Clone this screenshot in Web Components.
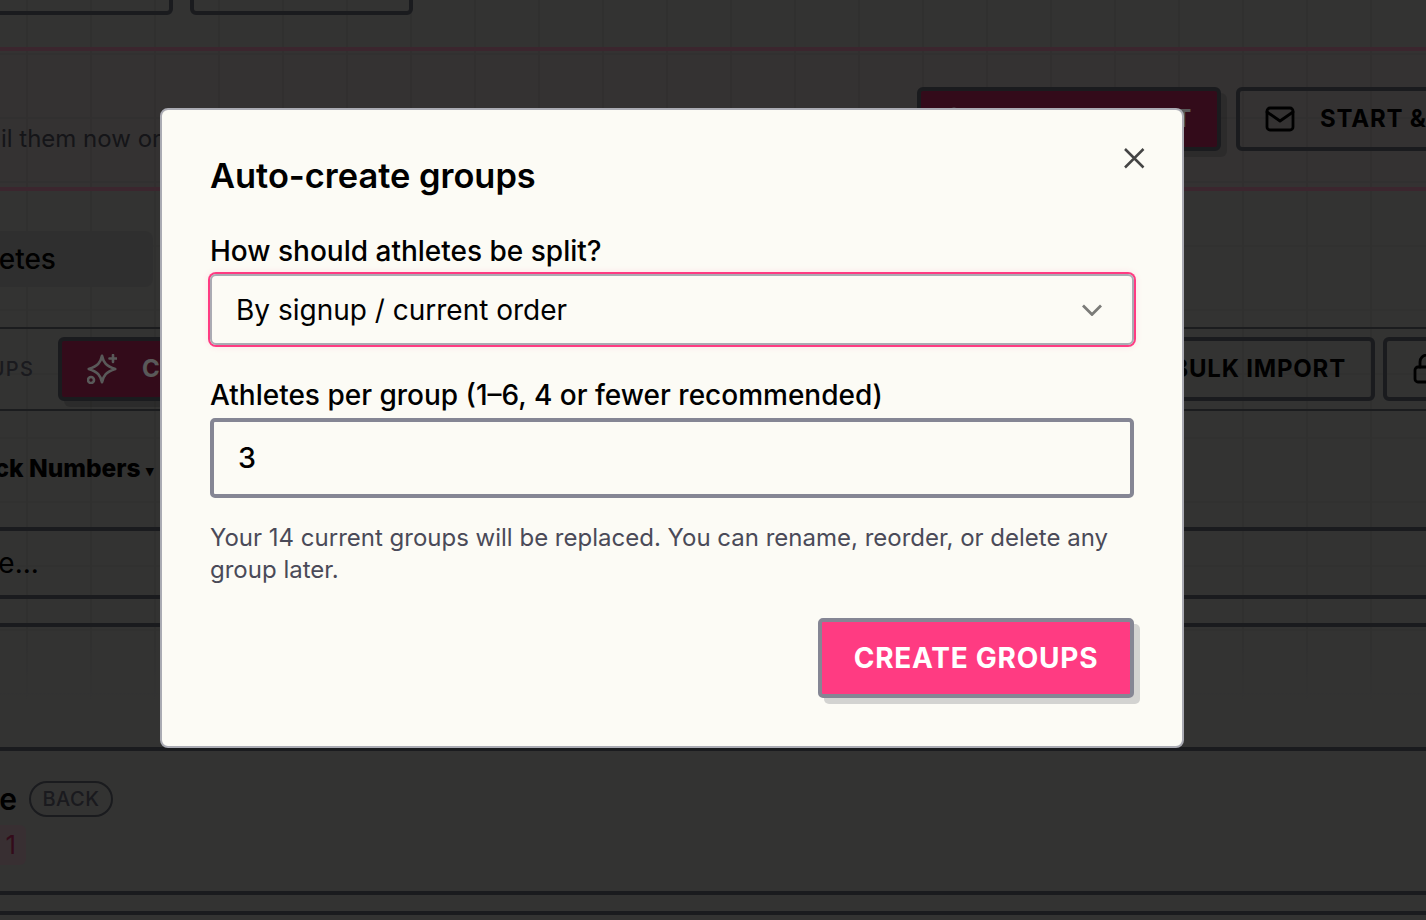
<!DOCTYPE html>
<html lang="en">
<head>
<meta charset="utf-8">
<title>Auto-create groups</title>
<style>
html,body{margin:0;padding:0;height:100%;overflow:hidden;background:#929290;font-family:Inter,"Liberation Sans",sans-serif}
</style>
</head>
<body>
<x-page>
  <x-band kind="top">
    <x-btn style="margin-left:-40px;width:213px"></x-btn>
    <x-btn style="width:223px"></x-btn>
  </x-band>
  <x-band kind="banner">
    <span class="note" style="margin-left:-48px;margin-bottom:-1px;flex:1;font-size:24px;line-height:26px;color:#3c3c46;white-space:nowrap">Email them now or</span>
    <x-btn variant="primary" style="width:304px">
      <svg slot="icon" viewBox="0 0 30 30" width="30" height="30" fill="none" stroke="#fff" stroke-width="3"><circle cx="8" cy="10" r="5"/></svg>
      <span style="margin-left:auto">T</span>
    </x-btn>
    <x-btn style="margin-left:15px;width:300px;margin-right:-110px">
      <svg slot="icon" viewBox="0 0 30 26" width="30" height="26" fill="none" stroke="#000" stroke-width="2.8" stroke-linecap="round" stroke-linejoin="round"><rect x="2" y="2" width="26" height="22" rx="3"/><path d="M2 6l13 9 13-9"/></svg>
      START &amp;
    </x-btn>
  </x-band>
  <x-band kind="search"><x-tab-box>Athletes</x-tab-box></x-band>
  <x-band kind="toolbar">
    <span style="margin-left:-57px;font-size:20px;font-weight:500;letter-spacing:1.2px;color:#4a4a56;margin-right:24px;white-space:nowrap">GROUPS</span>
    <x-btn variant="primary" style="width:260px">
      <svg slot="icon" viewBox="0 0 30 30" width="30" height="30" fill="none" stroke="#fff" stroke-width="2.600" stroke-linecap="round" stroke-linejoin="round"><path d="M16 2c1.500 7 4 10 13 13-9 3-11.500 6-13 13-1.500-7-4-10-13-13 9-3 11.500-6 13-13z" transform="translate(15 15) scale(1.020) translate(-16 -15)"/><path d="M26 1v7M22.500 4.500h7"/><circle cx="4" cy="26" r="3"/></svg>
      C
    </x-btn>
    <x-btn style="margin-left:auto;width:210px;justify-content:flex-end">BULK IMPORT</x-btn>
    <x-btn style="margin-left:8px;width:120px;margin-right:-77px">
      <svg slot="icon" viewBox="0 0 30 30" width="30" height="30" fill="none" stroke="#000" stroke-width="2.800" stroke-linecap="round" stroke-linejoin="round"><rect x="3" y="13" width="24" height="15" rx="3"/><path d="M8 13V8a7 7 0 0 1 14 0v5"/></svg>
    </x-btn>
  </x-band>
  <x-band kind="heading"><span style="margin-left:-45px;font-size:24.500px;font-weight:800;color:#000;white-space:nowrap">Track Numbers <span style="font-size:15px;vertical-align:1px">▾</span></span></x-band>
  <x-band kind="inputrow"><span style="margin-left:-63px;font-size:28px;color:#000;white-space:nowrap">Name...</span></x-band>
  <x-band kind="rule1"></x-band>
  <x-band kind="stage">
    <div style="display:flex;align-items:center;gap:12px;margin-left:-67px">
      <span style="font-size:30px;font-weight:600;color:#000;white-space:nowrap">Stage</span><x-pill>BACK</x-pill>
    </div>
    <x-chip>1</x-chip>
  </x-band>
  <x-band kind="rule2"></x-band>
  <x-band kind="rule3"></x-band>
</x-page>

<x-modal heading="Auto-create groups">
  <x-field label="How should athletes be split?"><x-select-box>By signup / current order</x-select-box></x-field>
  <x-field label="Athletes per group (1–6, 4 or fewer recommended)" style="margin-top:32px"><x-number-box>3</x-number-box></x-field>
  <p slot="help">Your 14 current groups will be replaced. You can rename, reorder, or delete any group later.</p>
  <x-create-button slot="actions">CREATE GROUPS</x-create-button>
</x-modal>

<script>
function def(name, css, html, setup){
  customElements.define(name, class extends HTMLElement{
    constructor(){super();const s=this.attachShadow({mode:'open'});
      s.innerHTML='<style>'+css+'</style>'+(typeof html==='function'?html(this):html);}
    connectedCallback(){ if(setup) setup(this,this.shadowRoot); }
  });
}
def('x-page',`:host{display:block;position:relative;width:100%;height:920px;overflow:hidden;color:#000;
  background-color:#929290;
  background-image:linear-gradient(to bottom,transparent 640px,#929290 700px),linear-gradient(to right,#8a8a88 2px,transparent 2px),linear-gradient(to bottom,#8c8c8a 2px,transparent 2px);
  background-size:100% 100%,64px 64px,64px 64px;background-position:0 0,26px 53px,26px 53px}`,'<slot></slot>');

const bands={
 top:'display:flex;gap:17px;height:15px;align-items:flex-end;overflow:hidden;margin-bottom:32px',
 banner:'display:flex;align-items:flex-end;box-sizing:content-box;padding:36px 0;height:64px;border-top:4px solid #a96e83;border-bottom:4px solid #a96e83;background:rgba(255,59,130,.02)',
 search:'display:block;padding:40px 0 40px;height:56px',
 toolbar:'display:flex;align-items:center;height:64px;padding:8px 0;border-top:2px solid #4f5058;border-bottom:2px solid #4f5058',
 heading:'display:flex;align-items:center;height:116px;box-sizing:border-box;padding-bottom:3px',
 inputrow:'display:flex;align-items:center;height:64px;border-top:4px solid #4a4d56;border-bottom:4px solid #4a4d56;margin-bottom:24px',
 rule1:'display:block;height:120px;border-top:4px solid #4a4d56',
 stage:'display:block;box-sizing:content-box;height:110px;padding-top:30px;border-top:4px solid #4a4d56',
 rule2:'display:block;height:16px;border-top:4px solid #4a4d56',
 rule3:'display:block;height:20px;border-top:4px solid #4a4d56'
};
customElements.define('x-band',class extends HTMLElement{
  constructor(){super();this.attachShadow({mode:'open'});}
  connectedCallback(){this.shadowRoot.innerHTML='<style>:host{'+bands[this.getAttribute('kind')]+'}</style><slot></slot>';}
});

def('x-btn',`:host{display:flex;flex:none;align-items:center;gap:25px;box-sizing:border-box;height:64px;padding:0 25px;
  border:4px solid #4a4d56;border-radius:6px;color:#000;font:700 24px/1 Inter,"Liberation Sans",sans-serif;letter-spacing:.8px;white-space:nowrap}
  :host([variant=primary]){background:#92224a;color:#fff;box-shadow:6px 6px 0 rgba(0,0,0,.14)}
  ::slotted(svg){flex:none}`,'<slot name="icon"></slot><slot></slot>');

def('x-tab-box',`:host{display:block;box-sizing:border-box;width:153px;height:56px;margin-left:0;border-radius:0 8px 8px 0;
  background:#888886;overflow:hidden;color:#000;font:500 28px/56px Inter,"Liberation Sans",sans-serif}
  div{margin-left:-54px;white-space:nowrap}`,'<div><slot></slot></div>');

def('x-pill',`:host{display:inline-block;box-sizing:border-box;height:36px;padding:0 11.500px;border:2px solid #4a4d56;border-radius:18px;
  color:#4a4a56;font:500 20px/32px Inter,"Liberation Sans",sans-serif;letter-spacing:.5px}`,'<slot></slot>');

def('x-chip',`:host{display:block;box-sizing:border-box;width:26px;height:40px;margin-top:8px;border-radius:0 6px 6px 0;
  background:#a08890;color:#92224a;font:400 26px/40px Inter,"Liberation Sans",sans-serif;text-align:right;padding-right:10px}`,'<slot></slot>');

def('x-modal',`:host{position:fixed;inset:0;z-index:10;display:flex;justify-content:center;align-items:flex-start;box-sizing:border-box;
  padding:108px 82px 0 0;background:rgba(0,0,0,.65);font-family:Inter,"Liberation Sans",sans-serif}
  .dialog{position:relative;box-sizing:border-box;width:1024px;height:640px;padding:48px;background:#fcfbf5;border:2px solid #aaabb3;border-radius:8px}
  h2{margin:0 0 39px;font:600 34.400px/36px Inter,"Liberation Sans",sans-serif;color:#000}
  button{position:absolute;top:36px;right:36px;width:24px;height:24px;padding:0;border:0;background:none;display:block}
  svg{display:block}
  ::slotted(p){margin:24px 0 0;font-size:24px;line-height:32px;color:#4a4a58}
  .actions{display:flex;justify-content:flex-end;margin-top:32px}`,
  h=>`<div class="dialog" role="dialog"><h2>${h.getAttribute('heading')}</h2>
  <button aria-label="Close"><svg viewBox="0 0 24 24" width="24" height="24" fill="none" stroke="#444" stroke-width="2.500"><path d="M3 3l18.500 18.500M21.500 3L3 21.500"/></svg></button>
  <slot></slot><slot name="help"></slot><div class="actions"><slot name="actions"></slot></div></div>`);

customElements.define('x-field',class extends HTMLElement{
  constructor(){super();const s=this.attachShadow({mode:'open'});
    s.innerHTML=`<style>:host{display:block}
    label{display:block;margin-bottom:5px;font:500 28px/36px Inter,"Liberation Sans",sans-serif;color:#000}</style>
    <label></label><slot></slot>`;}
  connectedCallback(){this.shadowRoot.querySelector('label').textContent=this.getAttribute('label');}
});

def('x-select-box',`:host{display:flex;align-items:center;justify-content:space-between;box-sizing:border-box;height:71px;padding:1px 30px 0 24px;
  border:2px solid #aaabb3;border-radius:6px;box-shadow:0 0 0 2px #ff3b82,0 0 6px 2px rgba(255,59,130,.12);
  font:400 28px/1 Inter,"Liberation Sans",sans-serif;color:#000}
  svg{display:block}`,
  `<slot></slot><svg viewBox="0 0 20 12" width="20" height="12" fill="none" stroke="#7b7b78" stroke-width="2.800"><path d="M1 1.500l9 9 9-9"/></svg>`);

def('x-number-box',`:host{display:block;box-sizing:border-box;height:80px;padding:0 24px;border:4px solid #858694;border-radius:5px;
  font:500 28.700px/72px Inter,"Liberation Sans",sans-serif;color:#000}`,'<slot></slot>');

def('x-create-button',`:host{display:block;box-sizing:border-box;width:316px;height:80px;border:4px solid #858694;border-radius:5px;
  background:#ff3b82;box-shadow:6px 6px 0 #d3d3d1;color:#fff;text-align:center;
  font:700 28px/72px Inter,"Liberation Sans",sans-serif;letter-spacing:.75px}`,'<slot></slot>');
</script>
</body>
</html>
